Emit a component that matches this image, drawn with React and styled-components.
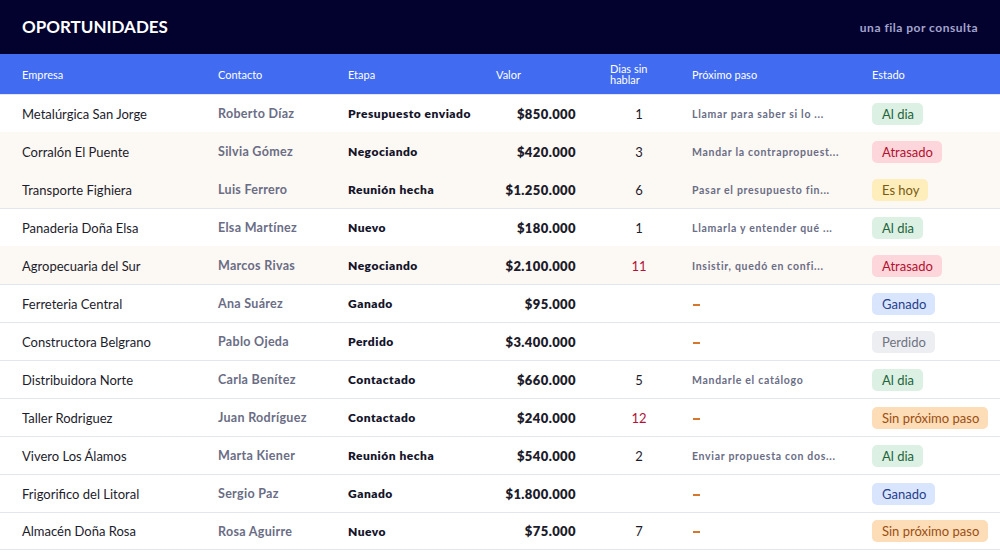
import React from 'react'
import styled, { createGlobalStyle } from 'styled-components'

const GlobalStyle = createGlobalStyle`
  html, body {
    margin: 0;
    padding: 0;
    background: #ffffff;
    font-family: Lato, "Noto Sans", sans-serif;
  }
`

const Page = styled.div`
  width: 1000px;
  height: 560px;
  overflow: hidden;
  background: #fff;
`

const TopBar = styled.header`
  height: 54px;
  background: #03022e;
  display: flex;
  align-items: center;
  justify-content: space-between;
  padding: 0 22px;
  box-sizing: border-box;
`

const Title = styled.h1`
  margin: 0 0 2px;
  font-size: 17px;
  font-weight: 700;
  color: #fff;
`

const Subtitle = styled.span`
  font-size: 12px;
  font-weight: 700;
  color: #a3a5cf;
  letter-spacing: 0.5px;
`

const COLS = '196px 130px 148px 80px 116px 180px 1fr'

const HeadRow = styled.div`
  display: grid;
  grid-template-columns: ${COLS};
  align-items: center;
  height: 40px;
  padding-left: 22px;
  background: #416bf0;
  color: #fff;
  font-size: 11px;
  line-height: 11px;
`

const HeadCell = styled.div`
  padding: ${p => (p.$days ? '0 24px 0 34px' : '0')};
  text-align: left;
`

const Row = styled.div`
  display: grid;
  grid-template-columns: ${COLS};
  align-items: center;
  height: 38px;
  box-sizing: border-box;
  padding-left: 22px;
  background: ${p => (p.$warm ? '#fcf8f3' : '#fff')};
  border-top: 1px solid ${p => (p.$warm ? '#fcf8f3' : '#e3e6ec')};
  &:last-child {
    border-bottom: 1px solid #e3e6ec;
  }
`

const Company = styled.div`
  font-size: 13px;
  color: #1c1c2b;
`

const Contact = styled.div`
  font-size: 12.5px;
  font-weight: 700;
  color: #6a6d85;
  letter-spacing: 0.3px;
`

const Stage = styled.div`
  font-size: 12px;
  font-weight: 800;
  color: #14142a;
  letter-spacing: 0.5px;
`

const Amount = styled.div`
  font-size: 13px;
  font-weight: 800;
  color: #1c1c2b;
  text-align: right;
  letter-spacing: 0.4px;
`

const Days = styled.div`
  padding: 0 24px 0 34px;
  text-align: center;
  font-size: 13px;
  color: ${p => (p.$late ? '#b3123a' : '#1c1c2b')};
`

const NextStep = styled.div`
  max-width: 152px;
  white-space: nowrap;
  overflow: hidden;
  text-overflow: ellipsis;
  font-size: 10.5px;
  font-weight: 700;
  color: #6a6d85;
  letter-spacing: 0.7px;
`

const Dash = styled.span`
  display: inline-block;
  width: 7px;
  height: 2px;
  margin-left: 1px;
  background: #d5782d;
  vertical-align: middle;
`

const BADGES = {
  'Al dia': ['#dcf1e3', '#23633b'],
  'Atrasado': ['#fdd6dc', '#b3102e'],
  'Es hoy': ['#fdeebc', '#7a5a12'],
  'Ganado': ['#d9e5fd', '#27408b'],
  'Perdido': ['#eceef2', '#70737f'],
  'Sin próximo paso': ['#fddcb8', '#9a4f12'],
}

const Badge = styled.span`
  display: inline-flex;
  align-items: center;
  height: 22px;
  padding: 0 9px 0 10px;
  border-radius: 5px;
  font-size: 13px;
  background: ${p => BADGES[p.$kind][0]};
  color: ${p => BADGES[p.$kind][1]};
`

const rows = [
  ['Metalúrgica San Jorge', 'Roberto Díaz', 'Presupuesto enviado', '$850.000', '1', 'Llamar para saber si lo ...', 'Al dia'],
  ['Corralón El Puente', 'Silvia Gómez', 'Negociando', '$420.000', '3', 'Mandar la contrapropuest...', 'Atrasado', true],
  ['Transporte Fighiera', 'Luis Ferrero', 'Reunión hecha', '$1.250.000', '6', 'Pasar el presupuesto fin...', 'Es hoy', true],
  ['Panaderia Doña Elsa', 'Elsa Martínez', 'Nuevo', '$180.000', '1', 'Llamarla y entender qué ...', 'Al dia'],
  ['Agropecuaria del Sur', 'Marcos Rivas', 'Negociando', '$2.100.000', '11', 'Insistir, quedó en confi...', 'Atrasado', true],
  ['Ferreteria Central', 'Ana Suárez', 'Ganado', '$95.000', '', '', 'Ganado'],
  ['Constructora Belgrano', 'Pablo Ojeda', 'Perdido', '$3.400.000', '', '', 'Perdido'],
  ['Distribuidora Norte', 'Carla Benítez', 'Contactado', '$660.000', '5', 'Mandarle el catálogo', 'Al dia'],
  ['Taller Rodriguez', 'Juan Rodríguez', 'Contactado', '$240.000', '12', '', 'Sin próximo paso'],
  ['Vivero Los Álamos', 'Marta Kiener', 'Reunión hecha', '$540.000', '2', 'Enviar propuesta con dos...', 'Al dia'],
  ['Frigorifico del Litoral', 'Sergio Paz', 'Ganado', '$1.800.000', '', '', 'Ganado'],
  ['Almacén Doña Rosa', 'Rosa Aguirre', 'Nuevo', '$75.000', '7', '', 'Sin próximo paso'],
]

export default function App() {
  return (
    <Page>
      <GlobalStyle />
      <TopBar>
        <Title>OPORTUNIDADES</Title>
        <Subtitle>una fila por consulta</Subtitle>
      </TopBar>
      <HeadRow>
        <HeadCell>Empresa</HeadCell>
        <HeadCell>Contacto</HeadCell>
        <HeadCell>Etapa</HeadCell>
        <HeadCell>Valor</HeadCell>
        <HeadCell $days>Dias sin hablar</HeadCell>
        <HeadCell>Próximo paso</HeadCell>
        <HeadCell>Estado</HeadCell>
      </HeadRow>
      <div>
        {rows.map(([company, contact, stage, amount, days, next, state, warm]) => (
          <Row key={company} $warm={warm}>
            <Company>{company}</Company>
            <Contact>{contact}</Contact>
            <Stage>{stage}</Stage>
            <Amount>{amount}</Amount>
            <Days $late={Number(days) > 10}>{days}</Days>
            <NextStep>{next || <Dash aria-label="–" />}</NextStep>
            <div>
              <Badge $kind={state}>{state}</Badge>
            </div>
          </Row>
        ))}
      </div>
    </Page>
  )
}
